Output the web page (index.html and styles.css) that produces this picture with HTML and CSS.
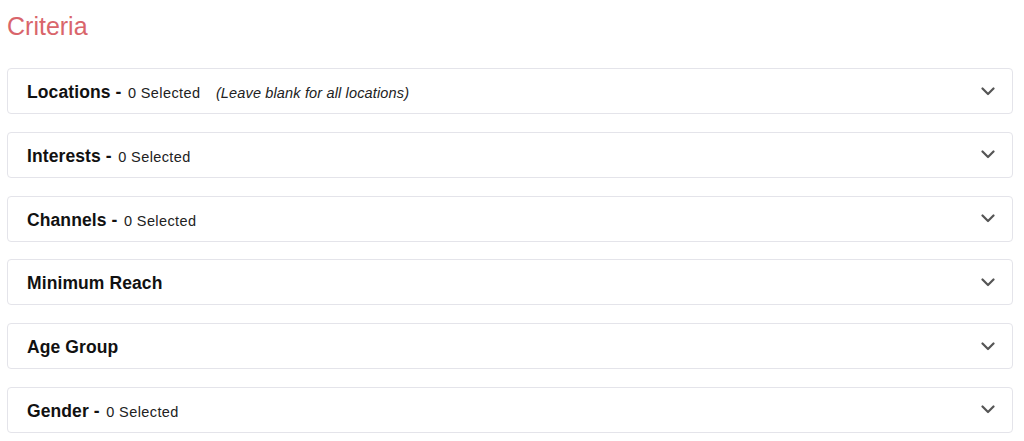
FILE: index.html
```html
<!DOCTYPE html>
<html>
<head>
  <meta charset="utf-8">
  <title>Criteria</title>
  <link rel="stylesheet" href="styles.css">
</head>
<body>
  <h1 class="page-title">Criteria</h1>

  <div class="panel">
    <div class="panel-head">
      <div class="title">
        <span class="label">Locations -</span>
        <span class="count">0 Selected</span>
        <span class="hint">(Leave blank for all locations)</span>
      </div>
      <svg class="chevron" viewBox="0 0 14 9"><path d="M1.5 1.5 L7 7 L12.5 1.5"/></svg>
    </div>
  </div>

  <div class="panel">
    <div class="panel-head">
      <div class="title">
        <span class="label">Interests -</span>
        <span class="count">0 Selected</span>
      </div>
      <svg class="chevron" viewBox="0 0 14 9"><path d="M1.5 1.5 L7 7 L12.5 1.5"/></svg>
    </div>
  </div>

  <div class="panel">
    <div class="panel-head">
      <div class="title">
        <span class="label">Channels -</span>
        <span class="count">0 Selected</span>
      </div>
      <svg class="chevron" viewBox="0 0 14 9"><path d="M1.5 1.5 L7 7 L12.5 1.5"/></svg>
    </div>
  </div>

  <div class="panel">
    <div class="panel-head">
      <div class="title">
        <span class="label">Minimum Reach</span>
      </div>
      <svg class="chevron" viewBox="0 0 14 9"><path d="M1.5 1.5 L7 7 L12.5 1.5"/></svg>
    </div>
  </div>

  <div class="panel">
    <div class="panel-head">
      <div class="title">
        <span class="label">Age Group</span>
      </div>
      <svg class="chevron" viewBox="0 0 14 9"><path d="M1.5 1.5 L7 7 L12.5 1.5"/></svg>
    </div>
  </div>

  <div class="panel">
    <div class="panel-head">
      <div class="title">
        <span class="label">Gender -</span>
        <span class="count">0 Selected</span>
      </div>
      <svg class="chevron" viewBox="0 0 14 9"><path d="M1.5 1.5 L7 7 L12.5 1.5"/></svg>
    </div>
  </div>
</body>
</html>
```

FILE: styles.css
```css
html { background: #fff; }

body {
  margin: 0;
  padding: 0 11px 0 7px;
  font-family: "Liberation Sans", Arial, sans-serif;
  color: #1c1c1e;
}

.page-title {
  margin: 11px 0 27px;
  font-size: 25px;
  line-height: 30px;
  font-weight: normal;
  color: #d9656b;
}

.panel {
  height: 46px;
  box-sizing: border-box;
  border: 1px solid #e4e4ea;
  border-radius: 4px;
  background: #fff;
  margin-bottom: 17.8px;
}

.panel-head {
  height: 100%;
  display: flex;
  align-items: center;
  padding: 0 17px 0 19px;
  box-sizing: border-box;
}

.title {
  padding-top: 3px;
  line-height: 22px;
  white-space: nowrap;
}

.label {
  font-size: 17.5px;
  font-weight: bold;
  letter-spacing: 0.1px;
  color: #111;
}

.count {
  font-size: 14.5px;
  letter-spacing: 0.4px;
  margin-left: 2px;
  color: #222;
}

.hint {
  font-size: 14.5px;
  font-style: italic;
  letter-spacing: 0.15px;
  margin-left: 11px;
  color: #222;
}

.chevron {
  margin-left: auto;
  width: 14px;
  height: 9px;
  fill: none;
  stroke: #555;
  stroke-width: 2.2;
  stroke-linecap: round;
  stroke-linejoin: round;
}
```
